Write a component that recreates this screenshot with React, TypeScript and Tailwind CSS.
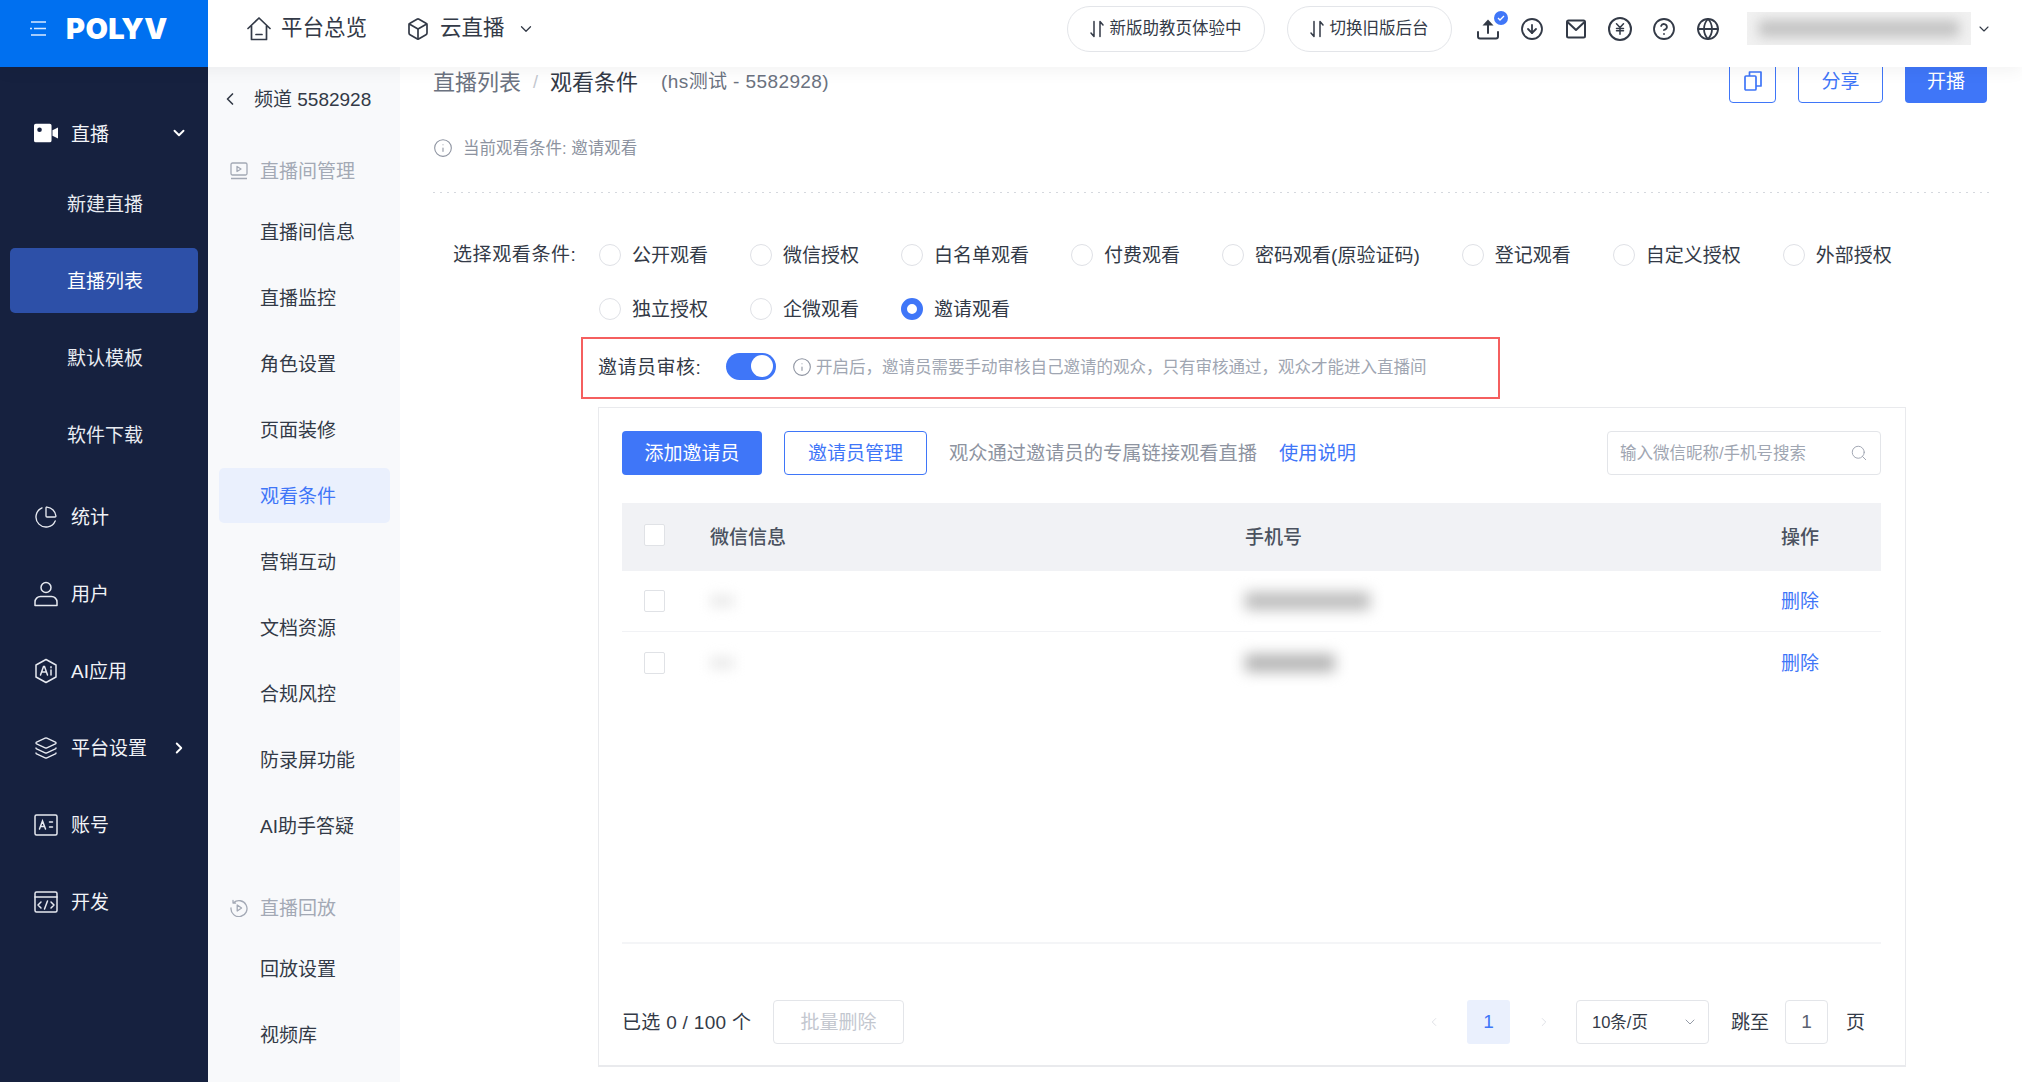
import {
  Box,
  ChartPie,
  ChevronDown,
  ChevronLeft,
  ChevronRight,
  CircleArrowDown,
  CircleHelp,
  Globe,
  Info,
  JapaneseYen,
  Layers,
  Search,
} from "lucide-react";
import type { ReactNode } from "react";

const FONT = "font-['Liberation_Sans','Noto_Sans_CJK_SC',sans-serif]";

function VideoIcon() {
  return (
    <svg width="26" height="24" viewBox="0 0 26 22" fill="white">
      <path
        fillRule="evenodd"
        d="M2 1h15a2 2 0 0 1 2 2v16a2 2 0 0 1-2 2H2a2 2 0 0 1-2-2V3a2 2 0 0 1 2-2zm4 4a2.5 2.5 0 1 0 0 5 2.5 2.5 0 0 0 0-5z"
      />
      <path d="M20 8l6-3v12l-6-3z" />
    </svg>
  );
}

function HomeIcon() {
  return (
    <svg width="26" height="26" viewBox="0 0 26 26" fill="none" stroke="#333a47" strokeWidth="1.7">
      <path d="M2 12.5L13 2l11 10.5M5.5 10v13.5h15V10" strokeLinejoin="round" strokeLinecap="round" />
      <path d="M10 18.5h6" strokeLinecap="round" />
    </svg>
  );
}

function SwapIcon() {
  return (
    <svg width="14" height="18" viewBox="0 0 14 18" fill="none" stroke="#333a47" strokeWidth="1.5">
      <path d="M4 1.5v15L1 13M10 16.5v-15L13 5" strokeLinecap="round" strokeLinejoin="round" />
    </svg>
  );
}

function UploadIcon() {
  return (
    <svg width="24" height="24" viewBox="0 0 24 24" fill="none" stroke="#333a47" strokeWidth="2">
      <path d="M2 15v4.5a2 2 0 0 0 2 2h16a2 2 0 0 0 2-2V15M12 16V8" strokeLinecap="round" />
      <path d="M12 2.5l5.5 6h-11z" fill="#333a47" stroke="none" />
    </svg>
  );
}

function UserIcon() {
  return (
    <svg width="24" height="26" viewBox="0 0 24 26" fill="none" stroke="#e6e9f0" strokeWidth="1.5">
      <circle cx="12" cy="6.5" r="5" />
      <path d="M1 24.5v-3.5a5.5 5.5 0 0 1 5.5-5.5h11a5.5 5.5 0 0 1 5.5 5.5v3.5z" strokeLinejoin="round" />
    </svg>
  );
}

function AiIcon() {
  return (
    <svg width="24" height="26" viewBox="0 0 24 26" fill="none" stroke="#e6e9f0" strokeWidth="1.5">
      <path d="M12 1.5l10 5.5v12l-10 5.5-10-5.5V7z" strokeLinejoin="round" />
      <path d="M6.5 17l3-8.5h1l3 8.5M7.7 14h4.6M17 12v5M17 8.7v1" strokeLinecap="round" />
    </svg>
  );
}

function AccountIcon() {
  return (
    <svg width="24" height="22" viewBox="0 0 24 22" fill="none" stroke="#e6e9f0" strokeWidth="1.5">
      <rect x="1" y="1" width="22" height="20" rx="1.5" />
      <path d="M5.5 15l3-8 3 8M6.7 12.5h3.6M15.5 8h3M15.5 13h3" strokeLinecap="round" />
    </svg>
  );
}

function DevIcon() {
  return (
    <svg width="24" height="22" viewBox="0 0 24 22" fill="none" stroke="#e6e9f0" strokeWidth="1.5">
      <rect x="1" y="1" width="22" height="20" rx="1.5" />
      <path d="M1 6h22M7 11l-3 3 3 3M17 11l3 3-3 3M13.5 10l-3 8" strokeLinecap="round" strokeLinejoin="round" />
    </svg>
  );
}

function MailIcon() {
  return (
    <svg width="20" height="20" viewBox="0 0 20 20" fill="none" stroke="#333a47" strokeWidth="2">
      <rect x="1" y="1.5" width="18" height="17" rx="1.5" />
      <path d="M1.5 3l8.5 8 8.5-8" strokeLinejoin="round" />
    </svg>
  );
}

function CopyIcon() {
  return (
    <svg width="20" height="22" viewBox="0 0 20 22" fill="none" stroke="#3f76f8" strokeWidth="1.7">
      <rect x="2" y="6" width="11" height="14" rx="1" />
      <path d="M6.5 6V2h11.5v14h-5" strokeLinejoin="round" />
    </svg>
  );
}

function LiveRoomIcon() {
  return (
    <svg width="18" height="18" viewBox="0 0 18 18" fill="none" stroke="#a3a9b5" strokeWidth="1.3">
      <rect x="1" y="1" width="16" height="12" rx="1.5" />
      <path d="M7 4.5l4 2.5-4 2.5zM1 16.5h16" strokeLinejoin="round" />
    </svg>
  );
}

function ReplayIcon() {
  return (
    <svg width="18" height="18" viewBox="0 0 18 18" fill="none" stroke="#a3a9b5" strokeWidth="1.3">
      <path d="M3.5 3.8A8 8 0 1 1 1 9M3 1.5v2.6h2.6" strokeLinecap="round" strokeLinejoin="round" />
      <path d="M7.2 6l4.4 3-4.4 3z" strokeLinejoin="round" />
    </svg>
  );
}

function NavRow({ icon, label, arrow, className }: { icon: ReactNode; label: string; arrow?: ReactNode; className: string }) {
  return (
    <div className={`flex items-center pl-[34px] pr-[20px] text-[19px] text-[#f1f3f7] ${className}`}>
      <span className="flex w-[24px] justify-center">{icon}</span>
      <span className="ml-[13px] flex-1 pt-[4px]">{label}</span>
      {arrow}
    </div>
  );
}

function SubNav({ label, active }: { label: string; active?: boolean }) {
  return (
    <div className="flex h-[77px] items-center justify-center px-[10px]">
      <div
        className={`flex h-[65px] w-[188px] items-center rounded-[5px] pl-[57px] pt-[4px] text-[19px] ${
          active ? "bg-[#2d50a8] text-white" : "text-[#e9ecf2]"
        }`}
      >
        {label}
      </div>
    </div>
  );
}

function Sidebar() {
  const iconProps = { size: 28, strokeWidth: 1.35, color: "#e6e9f0" };
  return (
    <aside className="h-full w-[208px] shrink-0 bg-[#16213f] pt-[34px]">
      <NavRow
        className="h-[64px]"
        icon={<VideoIcon />}
        label="直播"
        arrow={<ChevronDown size={18} strokeWidth={2.5} color="#fff" />}
      />
      <SubNav label="新建直播" />
      <SubNav label="直播列表" active />
      <SubNav label="默认模板" />
      <SubNav label="软件下载" />
      <NavRow className="mt-[5px] h-[77px]" icon={<ChartPie {...iconProps} />} label="统计" />
      <NavRow className="h-[77px]" icon={<UserIcon />} label="用户" />
      <NavRow className="h-[77px]" icon={<AiIcon />} label="AI应用" />
      <NavRow
        className="h-[77px]"
        icon={<Layers {...iconProps} />}
        label="平台设置"
        arrow={<ChevronRight size={18} strokeWidth={2.5} color="#fff" />}
      />
      <NavRow className="h-[77px]" icon={<AccountIcon />} label="账号" />
      <NavRow className="h-[77px]" icon={<DevIcon />} label="开发" />
    </aside>
  );
}

function ChannelItem({ label, active }: { label: string; active?: boolean }) {
  return (
    <div className="flex h-[66px] items-center pl-[11px]">
      <div
        className={`flex h-[55px] w-[171px] items-center rounded-[5px] pl-[41px] pt-[4px] text-[19px] ${
          active ? "bg-[#eaf0fd] text-[#3f76f8]" : "text-[#333a47]"
        }`}
      >
        {label}
      </div>
    </div>
  );
}

function ChannelGroup({ icon, label, className }: { icon: ReactNode; label: string; className: string }) {
  return (
    <div className={`flex h-[54px] items-center pl-[22px] text-[19px] text-[#a3a9b5] ${className}`}>
      <span className="w-[30px]">{icon}</span>
      <span className="pt-[3px]">{label}</span>
    </div>
  );
}

function ChannelNav() {
  return (
    <aside className="h-full w-[192px] shrink-0 bg-[#f8f9fb]">
      <div className="flex h-[64px] items-center pl-[12px] text-[19px] text-[#333a47]">
        <ChevronLeft size={20} strokeWidth={2} color="#333a47" />
        <span className="ml-[14px] pt-[2px]">频道 5582928</span>
      </div>
      <ChannelGroup className="mt-[13px]" icon={<LiveRoomIcon />} label="直播间管理" />
      <ChannelItem label="直播间信息" />
      <ChannelItem label="直播监控" />
      <ChannelItem label="角色设置" />
      <ChannelItem label="页面装修" />
      <ChannelItem label="观看条件" active />
      <ChannelItem label="营销互动" />
      <ChannelItem label="文档资源" />
      <ChannelItem label="合规风控" />
      <ChannelItem label="防录屏功能" />
      <ChannelItem label="AI助手答疑" />
      <ChannelGroup className="mt-[23px]" icon={<ReplayIcon />} label="直播回放" />
      <ChannelItem label="回放设置" />
      <ChannelItem label="视频库" />
    </aside>
  );
}

function Pill({ label, className }: { label: string; className: string }) {
  return (
    <div
      className={`flex h-[46px] items-center justify-center gap-[6px] rounded-full border border-[#e3e5e9] text-[16.5px] text-[#333a47] ${className}`}
    >
      <SwapIcon />
      {label}
    </div>
  );
}

function TopBar() {
  const iconProps = { size: 24, strokeWidth: 1.8, color: "#333a47" };
  return (
    <header className="relative z-10 flex h-[67px] shrink-0 bg-white shadow-[0_4px_16px_rgba(0,0,0,0.05)]">
      <div className="flex h-full w-[208px] shrink-0 items-center bg-[#0070f0] pb-[11px] pl-[30px]">
        <svg width="16" height="15" viewBox="0 0 16 15" stroke="#d9e9ff" strokeWidth="1.7">
          <path d="M1 1h15M4 7.5h12M0 7.5h2M1 14h15" />
        </svg>
        <span className="ml-[20px] font-['Inter',sans-serif] text-[29px] font-black leading-none tracking-[0.4px] text-white">POLYV</span>
      </div>
      <div className="flex flex-1 items-center pb-[10px]">
        <div className="ml-[38px] flex items-center text-[21.5px] text-[#333a47]">
          <HomeIcon />
          <span className="ml-[9px]">平台总览</span>
          <Box size={24} strokeWidth={1.7} color="#333a47" className="ml-[39px]" />
          <span className="ml-[10px]">云直播</span>
          <ChevronDown size={18} strokeWidth={1.7} color="#333a47" className="ml-[12px]" />
        </div>
        <Pill className="ml-[532px] w-[198px]" label="新版助教页体验中" />
        <Pill className="ml-[22px] w-[165px]" label="切换旧版后台" />
        <div className="ml-[24px] flex w-[244px] items-center gap-[20px]">
          <span className="relative">
            <UploadIcon />
            <span className="absolute -right-[8px] -top-[6px] flex h-[14px] w-[14px] items-center justify-center rounded-full bg-[#3f76f8]">
              <svg width="8" height="8" viewBox="0 0 8 8" fill="none" stroke="white" strokeWidth="1.3">
                <path d="M1 4l2 2 4-4" />
              </svg>
            </span>
          </span>
          <CircleArrowDown {...iconProps} />
          <span className="flex w-[24px] justify-center">
            <MailIcon />
          </span>
          <span className="relative flex h-[24px] w-[24px] items-center justify-center rounded-full border-[2px] border-[#333a47]">
            <JapaneseYen size={14} strokeWidth={2.6} color="#333a47" />
          </span>
          <CircleHelp {...iconProps} />
          <Globe {...iconProps} />
        </div>
        <div className="ml-[27px] h-[33px] w-[224px] overflow-hidden bg-[#f1f1f1]">
          <div className="ml-[12px] mt-[8px] h-[17px] w-[200px] bg-[#c4c4c4] blur-[6px]" />
        </div>
        <ChevronDown size={16} strokeWidth={1.7} color="#333a47" className="ml-[5px]" />
      </div>
    </header>
  );
}

function Radio({ label, checked }: { label: string; checked?: boolean }) {
  return (
    <label className="flex items-center gap-[11px] text-[19px] leading-[24px] text-[#333a47]">
      {checked ? (
        <span className="h-[22px] w-[22px] rounded-full border-[6px] border-[#3f76f8] bg-white" />
      ) : (
        <span className="h-[22px] w-[22px] rounded-full border border-[#dfe1e6] bg-white" />
      )}
      <span className="pt-[2px]">{label}</span>
    </label>
  );
}

function Checkbox({ className }: { className?: string }) {
  return <span className={`block h-[22px] w-[21px] rounded-[2px] border border-[#e0e2e6] bg-white ${className ?? ""}`} />;
}

function InvitorTable() {
  return (
    <div className="mt-[28px] h-[441px] border-b-2 border-[#f4f5f7]">
      <div className="grid h-[68px] grid-cols-[88px_535px_536px_1fr] items-center bg-[#f1f2f5] pt-[3px] text-[19px] font-medium text-[#4b5260]">
        <span className="pl-[22px]">
          <Checkbox className="-mt-[8px]" />
        </span>
        <span>微信信息</span>
        <span>手机号</span>
        <span>操作</span>
      </div>
      <div className="grid h-[61px] grid-cols-[88px_535px_536px_1fr] items-center border-b border-[#f1f2f5] text-[19px]">
        <span className="pl-[22px]">
          <Checkbox />
        </span>
        <span className="block h-[14px] w-[24px] bg-[#ededed] blur-[6px]" />
        <span className="block h-[18px] w-[125px] bg-[#bdbdbd] blur-[7px]" />
        <span className="pt-[3px] text-[#3f76f8]">删除</span>
      </div>
      <div className="grid h-[62px] grid-cols-[88px_535px_536px_1fr] items-center text-[19px]">
        <span className="pl-[22px]">
          <Checkbox />
        </span>
        <span className="block h-[14px] w-[24px] bg-[#ededed] blur-[6px]" />
        <span className="block h-[18px] w-[90px] bg-[#b5b5b5] blur-[7px]" />
        <span className="pt-[3px] text-[#3f76f8]">删除</span>
      </div>
    </div>
  );
}

function Pagination() {
  return (
    <div className="mt-[56px] flex h-[44px] items-center text-[19px] text-[#333a47]">
      <span className="w-[128px] whitespace-nowrap pt-[3px] tracking-[0.3px]">已选 0 / 100 个</span>
      <button className="ml-[23px] h-[44px] w-[131px] rounded-[4px] border border-[#e3e5e9] pt-[3px] text-[#c3c7cf]">批量删除</button>
      <ChevronLeft size={14} strokeWidth={1.3} color="#d5d8de" className="ml-[523px]" />
      <span className="ml-[26px] flex h-[44px] w-[43px] items-center justify-center rounded-[3px] bg-[#eaf0fd] text-[#3f76f8]">
        1
      </span>
      <ChevronRight size={14} strokeWidth={1.3} color="#d5d8de" className="ml-[27px]" />
      <div className="ml-[25px] flex h-[44px] w-[133px] items-center justify-between rounded-[4px] border border-[#e3e5e9] pl-[15px] pr-[10px] text-[16.5px]">
        10条/页
        <ChevronDown size={16} strokeWidth={1.4} color="#8d93a0" />
      </div>
      <span className="ml-[22px] pt-[3px] text-[19px]">跳至</span>
      <span className="ml-[16px] flex h-[44px] w-[43px] items-center justify-center rounded-[4px] border border-[#e3e5e9] text-[#5b6270]">
        1
      </span>
      <span className="ml-[18px] pt-[3px]">页</span>
    </div>
  );
}

function Main() {
  return (
    <main className="min-w-0 flex-1 overflow-hidden bg-white pl-[33px] pr-[33px]">
      <div className="-mt-[9px] flex h-[45px] items-center pr-[2px]">
        <span className="pt-[4px] text-[22px] text-[#6b7280]">直播列表</span>
        <span className="mx-[12px] pt-[4px] text-[18px] text-[#c3c7cf]">/</span>
        <span className="pt-[4px] text-[22px] text-[#333a47]">观看条件</span>
        <span className="ml-[23px] pt-[4px] text-[19px] tracking-[0.4px] text-[#6b7280]">(hs测试 - 5582928)</span>
        <button className="ml-auto flex h-[45px] w-[47px] items-center justify-center rounded-[4px] border border-[#3f76f8]">
          <CopyIcon />
        </button>
        <button className="ml-[22px] h-[45px] w-[85px] rounded-[4px] border border-[#3f76f8] pt-[4px] text-[19px] text-[#3f76f8]">
          分享
        </button>
        <button className="ml-[22px] h-[45px] w-[82px] rounded-[4px] bg-[#3f76f8] pt-[4px] text-[19px] text-white">开播</button>
      </div>
      <div className="mt-[34px] flex h-[22px] items-center text-[16.5px] text-[#8d93a0]">
        <Info size={20} strokeWidth={1.3} color="#8d93a0" />
        <span className="ml-[10px]">当前观看条件: 邀请观看</span>
      </div>
      <div className="mt-[33px] h-px bg-[repeating-linear-gradient(90deg,#d5d8de_0_2px,transparent_2px_7px)]" />
      <div className="mt-[49px] flex">
        <span className="w-[166px] shrink-0 pl-[20px] pt-[1px] text-[19px] leading-[24px] tracking-[0.6px] text-[#333a47]">选择观看条件:</span>
        <div className="flex flex-wrap gap-x-[42px] gap-y-[28px]">
          <Radio label="公开观看" />
          <Radio label="微信授权" />
          <Radio label="白名单观看" />
          <Radio label="付费观看" />
          <Radio label="密码观看(原验证码)" />
          <Radio label="登记观看" />
          <Radio label="自定义授权" />
          <Radio label="外部授权" />
          <Radio label="独立授权" />
          <Radio label="企微观看" />
          <Radio label="邀请观看" checked />
        </div>
      </div>
      <div className="ml-[148px] mt-[15px] flex h-[62px] w-[919px] items-center border-2 border-[#f55f5f] pl-[15px]">
        <span className="w-[114px] text-[19px] tracking-[0.5px] text-[#333a47]">邀请员审核:</span>
        <span className="mb-[4px] ml-[14px] flex h-[27px] w-[50px] items-center justify-end rounded-full bg-[#3f76f8] pr-[3px]">
          <span className="h-[22px] w-[22px] rounded-full bg-white" />
        </span>
        <Info size={20} strokeWidth={1.3} color="#8d93a0" className="mb-[3px] ml-[16px]" />
        <span className="mb-[1px] ml-[4px] text-[16.5px] text-[#a0a6b2]">
          开启后，邀请员需要手动审核自己邀请的观众，只有审核通过，观众才能进入直播间
        </span>
      </div>
      <section className="ml-[165px] mt-[8px] h-[660px] w-[1308px] border border-b-2 border-[#e9eaed] pl-[23px] pr-[24px] pt-[23px]">
        <div className="flex h-[44px] items-center">
          <button className="h-[44px] w-[140px] rounded-[4px] bg-[#3f76f8] pt-[2px] text-[19px] text-white">添加邀请员</button>
          <button className="ml-[22px] h-[44px] w-[143px] rounded-[4px] border border-[#3f76f8] pt-[2px] text-[19px] text-[#3f76f8]">
            邀请员管理
          </button>
          <span className="ml-[22px] pt-[2px] text-[19.25px] text-[#8d93a0]">观众通过邀请员的专属链接观看直播</span>
          <span className="ml-[22px] pt-[2px] text-[19.25px] text-[#3f76f8]">使用说明</span>
          <div className="ml-auto flex h-[44px] w-[274px] items-center justify-between rounded-[4px] border border-[#e3e5e9] pl-[12px] pr-[12px] text-[16.5px] text-[#a0a6b2]">
            输入微信昵称/手机号搜索
            <Search size={18} strokeWidth={1.3} color="#a0a6b2" />
          </div>
        </div>
        <InvitorTable />
        <Pagination />
      </section>
    </main>
  );
}

export default function App() {
  return (
    <div className={`flex h-[1082px] w-[2022px] flex-col overflow-hidden bg-white ${FONT}`}>
      <TopBar />
      <div className="flex min-h-0 flex-1">
        <Sidebar />
        <ChannelNav />
        <Main />
      </div>
    </div>
  );
}
